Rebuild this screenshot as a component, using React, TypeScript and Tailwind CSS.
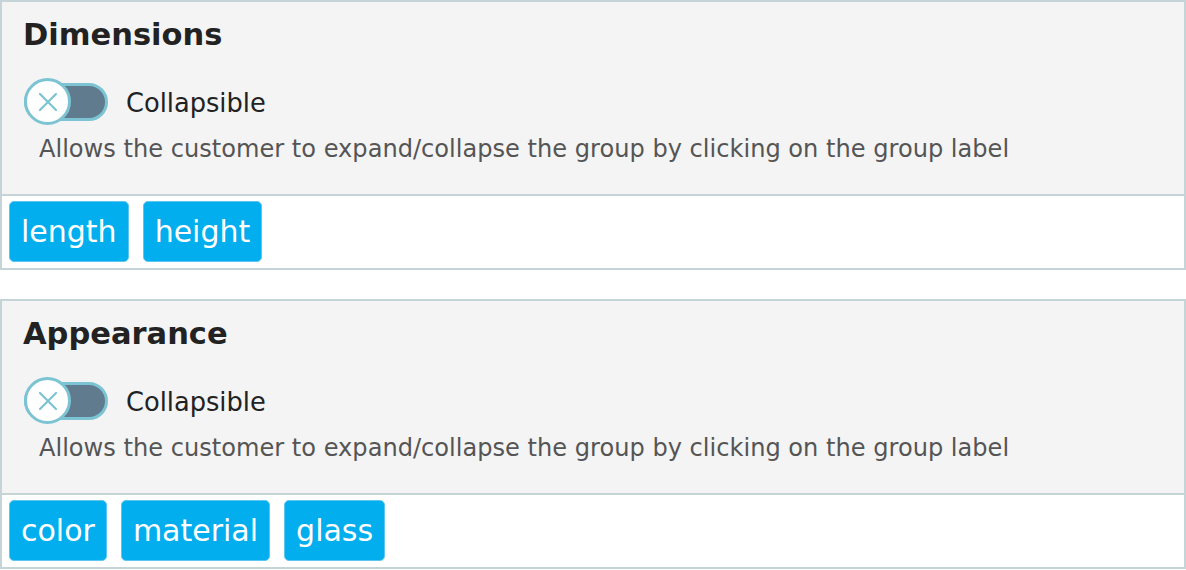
import React from "react";

function Toggle() {
  return (
    <div className="relative w-[84px] h-[47px] flex items-center shrink-0">
      <div className="w-[84px] h-[38px] rounded-full bg-[#5f7b8d] border-[3px] border-[#7cc3d3]" />
      <div className="absolute left-0 top-0 w-[47px] h-[47px] rounded-full bg-white border-[3px] border-[#7cc3d3] flex items-center justify-center">
        <svg width="20" height="20" viewBox="0 0 20 20">
          <path d="M2 2 L18 18 M18 2 L2 18" stroke="#7cc3d3" strokeWidth="2.2" strokeLinecap="round" />
        </svg>
      </div>
    </div>
  );
}

function Group({ title, tags }: { title: string; tags: string[] }) {
  return (
    <div className="border-2 border-[#c4d4d7] bg-white">
      <div className="bg-[#f4f4f4] pl-[21px] pt-[15px] pb-[31px] border-b-2 border-[#c4d4d7]">
        <div className="text-[30.5px] leading-[36px] font-bold text-[#222]">{title}</div>
        <div className="flex items-center mt-[25px] pl-[1px]">
          <Toggle />
          <span className="ml-[18px] text-[25.7px] leading-[30px] text-[#222] pt-[2px]">Collapsible</span>
        </div>
        <div className="mt-[10px] pl-[16px] text-[24.1px] leading-[28px] text-[#555]">
          Allows the customer to expand/collapse the group by clicking on the group label
        </div>
      </div>
      <div className="flex gap-[14px] pl-[7px] pt-[5px] pb-[6px]">
        {tags.map((t) => (
          <div
            key={t}
            className="h-[61px] px-[11px] flex items-center rounded-[5px] bg-[#02aeee] border border-[#5cc6f0] text-white text-[30px] leading-[36px]"
          >
            {t}
          </div>
        ))}
      </div>
    </div>
  );
}

export default function App() {
  return (
    <div
      className="w-[1186px] h-[570px] bg-white flex flex-col gap-[29px] overflow-hidden"
      style={{ fontFamily: '"DejaVu Sans", Verdana, sans-serif' }}
    >
      <Group title="Dimensions" tags={["length", "height"]} />
      <Group title="Appearance" tags={["color", "material", "glass"]} />
    </div>
  );
}
